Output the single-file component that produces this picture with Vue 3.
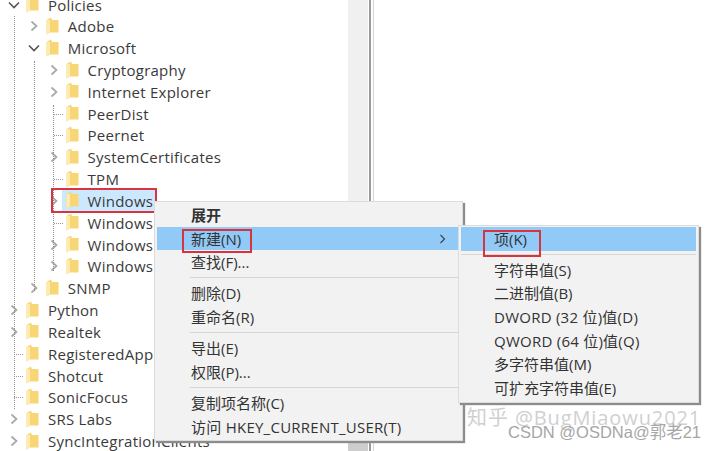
<script setup>
const rows = [
  { t: 'Policies', l: 0, c: 'open' },
  { t: 'Adobe', l: 1, c: 'closed' },
  { t: 'Microsoft', l: 1, c: 'open' },
  { t: 'Cryptography', l: 2, c: 'closed' },
  { t: 'Internet Explorer', l: 2, c: 'closed' },
  { t: 'PeerDist', l: 2, c: 'leaf' },
  { t: 'Peernet', l: 2, c: 'leaf' },
  { t: 'SystemCertificates', l: 2, c: 'closed' },
  { t: 'TPM', l: 2, c: 'leaf' },
  { t: 'Windows', l: 2, c: 'closed', sel: true },
  { t: 'Windows', l: 2, c: 'leaf' },
  { t: 'Windows', l: 2, c: 'closed' },
  { t: 'Windows', l: 2, c: 'closed' },
  { t: 'SNMP', l: 1, c: 'closed' },
  { t: 'Python', l: 0, c: 'closed' },
  { t: 'Realtek', l: 0, c: 'closed' },
  { t: 'RegisteredApplications', l: 0, c: 'leaf' },
  { t: 'Shotcut', l: 0, c: 'leaf' },
  { t: 'SonicFocus', l: 0, c: 'leaf' },
  { t: 'SRS Labs', l: 0, c: 'closed' },
  { t: 'SyncIntegrationClients', l: 0, c: 'closed' },
]
const indent = (l) => ({ paddingLeft: 4 + l * 19.8 + 'px' })
const menu = [
  [{ t: '展开', bold: true }, { t: '新建(N)', hot: true, arrow: true }, { t: '查找(F)...' }],
  [{ t: '删除(D)' }, { t: '重命名(R)' }],
  [{ t: '导出(E)' }, { t: '权限(P)...' }],
  [{ t: '复制项名称(C)' }, { t: '访问 HKEY_CURRENT_USER(T)', wide: true }],
]
const sub = [
  [{ t: '项(K)', hot: true }],
  [
    { t: '字符串值(S)' }, { t: '二进制值(B)' }, { t: 'DWORD (32 位)值(D)', wide: true },
    { t: 'QWORD (64 位)值(Q)', wide: true }, { t: '多字符串值(M)' }, { t: '可扩充字符串值(E)' },
  ],
]
</script>

<template>
  <div class="screen">
    <div class="tree">
      <div v-for="(r, i) in rows" :key="i" class="row" :style="indent(r.l)">
        <span class="exp">
          <svg v-if="r.c === 'closed'" width="10" height="14" viewBox="0 0 10 14"><path d="M2.5 2.5 7.5 7 2.5 11.5" fill="none" stroke="#a8a8a8" stroke-width="1.7"/></svg>
          <svg v-else-if="r.c === 'open'" width="12" height="10" viewBox="0 0 12 10"><path d="M1 2.5 6 7.5 11 2.5" fill="none" stroke="#555" stroke-width="1.6"/></svg>
          <span v-else class="leafdash"></span>
        </span>
        <span class="label" :class="{ sel: r.sel }">
          <svg class="folder" width="13" height="18" viewBox="0 0 13 18">
            <path d="M0.5 3 5 0.5 6 3 12.5 3 12.5 15.5 4 15.5 0.5 17.5Z" fill="#f8d675"/>
            <path d="M0.5 3 4 3 4 15.5 0.5 17.5Z" fill="#fdebb0"/>
          </svg>
          <span class="name">{{ r.t }}</span>
        </span>
      </div>
      <i class="guide g0"></i>
      <i class="guide g1"></i>
      <i class="guide g2"></i>
    </div>
    <div class="scroll"><div class="thumb"></div></div>
    <div class="split"></div>
    <div class="detail"></div>

    <div class="mark redbox box-win"></div>

    <div class="menu main">
      <template v-for="(g, gi) in menu" :key="gi">
        <div v-if="gi" class="sep"></div>
        <div v-for="m in g" :key="m.t" class="item" :class="{ hot: m.hot, bold: m.bold, wide: m.wide }">
          <span class="txt">{{ m.t }}</span>
          <svg v-if="m.arrow" class="arrow" width="7" height="10" viewBox="0 0 7 10"><path d="M1.5 1 5.5 5 1.5 9" fill="none" stroke="#444" stroke-width="1.2"/></svg>
        </div>
      </template>
    </div>

    <div class="menu submenu">
      <template v-for="(g, gi) in sub" :key="gi">
        <div v-if="gi" class="sep"></div>
        <div v-for="m in g" :key="m.t" class="item" :class="{ hot: m.hot, wide: m.wide }">
          <span class="txt">{{ m.t }}</span>
        </div>
      </template>
    </div>

    <div class="mark redbox box-new"></div>
    <div class="mark redbox box-key"></div>

    <div class="mark wm wm1">知乎 @BugMiaowu2021</div>
    <div class="mark wm wm2">CSDN @OSDNa@郭老21</div>
  </div>
</template>

<style>
html, body { margin: 0; background: #fff; }
</style>

<style scoped>
.screen {
  position: relative;
  width: 720px;
  height: 451px;
  overflow: hidden;
  display: flex;
  background: #fff;
  font-family: "Open Sans", "Noto Sans CJK SC", sans-serif;
  color: #3a3a3a;
}
.tree {
  position: relative;
  width: 348px;
  flex: none;
  margin-top: -6.4px;
  overflow: hidden;
  font-size: 15px;
}
.row {
  display: flex;
  align-items: center;
  height: 21.83px;
  white-space: nowrap;
}
.exp {
  width: 20px;
  height: 100%;
  flex: none;
  display: flex;
  align-items: center;
  justify-content: center;
  position: relative;
}
.leafdash {
  position: absolute;
  left: 10px;
  right: 1px;
  top: 50%;
  border-top: 1px dotted #999;
}
.label {
  display: flex;
  align-items: center;
  height: 100%;
  padding-left: 2px;
}
.label.sel {
  background: #cce8ff;
  height: 22px;
  margin-left: -2px;
  padding-left: 4px;
  padding-right: 4px;
}
.folder { flex: none; margin-right: 9px; margin-top: -1px; }
.name { letter-spacing: 0.25px; }
.guide {
  position: absolute;
  width: 0;
  border-left: 1px dotted #8f8f8f;
}
.g0 { left: 14px; top: 22px; height: 393px; }
.g1 { left: 34px; top: 67px; height: 230px; }
.g2 { left: 53px; top: 111px; height: 166px; }
.scroll {
  width: 20px;
  flex: none;
  background: #f0f0f0;
  position: relative;
}
.thumb {
  position: absolute;
  left: 0;
  right: 0;
  bottom: 0;
  height: 11px;
  background: #cdcdcd;
}
.split {
  width: 5px;
  flex: none;
  margin-left: 1px;
  border-left: 2px solid #9a9a9a;
  border-right: 1px solid #d4d4d4;
  box-sizing: border-box;
}
.detail { flex: 1; }
.menu {
  position: absolute;
  background: #f2f2f2;
  border: 1px solid #dcdcdc;
  box-shadow: 2px 2px 1px #8c8c8c;
  box-sizing: border-box;
  font-size: 15px;
  color: #333;
}
.main {
  left: 154px;
  top: 201px;
  width: 309px;
  height: 240px;
  padding: 1px 2px;
}
.submenu {
  left: 458px;
  top: 225px;
  width: 241px;
  height: 178px;
  padding: 1px 2px;
}
.item {
  height: 23.7px;
  display: flex;
  align-items: center;
  justify-content: space-between;
  padding: 0 14px 0 34px;
  white-space: nowrap;
}
.item.wide { letter-spacing: 0.25px; }
.txt { margin-top: -1px; }
.submenu .item { padding-left: 33px; }
.item.hot { background: #91c9f7; }
.item.bold { font-weight: 700; }
.sep {
  height: 7.5px;
  margin-left: 33px;
  background: linear-gradient(#d6d6d6, #d6d6d6) center / 100% 1px no-repeat;
}
.submenu .sep { margin-left: 0; height: 7px; }
.mark { position: absolute; box-sizing: border-box; }
.redbox { border: 2px solid #d8343f; pointer-events: none; }
.box-win { left: 51px; top: 188px; width: 106px; height: 25px; }
.box-new { left: 182px; top: 229px; width: 70px; height: 24px; }
.box-key { left: 483px; top: 230px; width: 58px; height: 27px; }
.wm {
  white-space: nowrap;
  line-height: 1;
}
.wm1 { left: 467px; top: 408px; font-size: 20px; color: #d0d0d0; letter-spacing: 0.9px; }
.wm2 { left: 508px; top: 424px; font-size: 16.5px; color: #a6a6a6; font-family: "Liberation Sans", "Noto Sans CJK SC", sans-serif; }
</style>
